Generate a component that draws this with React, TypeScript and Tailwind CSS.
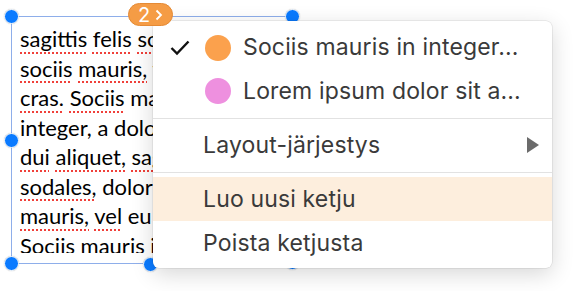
import React from "react";

const lines: { words: { t: string; bad?: boolean }[] }[] = [
  { words: [{ t: "sagittis", bad: true }, { t: "felis", bad: true }, { t: "sociis", bad: true }, { t: "mauris," }] },
  { words: [{ t: "sociis", bad: true }, { t: "mauris,", bad: true }, { t: "vel" }, { t: "eu" }] },
  { words: [{ t: "cras.", bad: true }, { t: "Sociis", bad: true }, { t: "mauris" }, { t: "in" }] },
  { words: [{ t: "integer," }, { t: "a" }, { t: "dolor" }, { t: "netus" }] },
  { words: [{ t: "dui", bad: true }, { t: "aliquet,", bad: true }, { t: "sagittis", bad: true }] },
  { words: [{ t: "sodales,", bad: true }, { t: "dolor" }, { t: "sociis" }] },
  { words: [{ t: "mauris,", bad: true }, { t: "vel", bad: true }, { t: "eu" }, { t: "libero" }] },
  { words: [{ t: "Sociis" }, { t: "mauris" }, { t: "in" }, { t: "integer" }] },
];

const Handle = ({ className }: { className: string }) => (
  <span
    className={`absolute w-[15px] h-[15px] -ml-[7.5px] -mt-[7.5px] rounded-full bg-[#0a7aff] border-[1.5px] border-white shadow-[0_0_1px_rgba(0,0,0,0.3)] ${className}`}
  />
);

const App = () => {
  return (
    <div className="relative w-[577px] h-[291px] bg-white overflow-hidden">
      {/* Text box on the canvas */}
      <div className="absolute left-[11px] top-[16px] w-[282px] h-[248px] border border-[#8eaeea]">
        <div
          className="h-[236px] overflow-hidden pl-[8px] pt-[7px] text-[22px] leading-[29.5px] text-black whitespace-nowrap"
          style={{ fontFamily: "Lato, sans-serif" }}
        >
          {lines.map((line, i) => (
            <div key={i}>
              {line.words.map((w, j) => (
                <React.Fragment key={j}>
                  <span
                    className={
                      w.bad
                        ? "underline decoration-dotted decoration-[#f0403a] decoration-[2px] underline-offset-[5px]"
                        : ""
                    }
                  >
                    {w.t}
                  </span>{" "}
                </React.Fragment>
              ))}
            </div>
          ))}
        </div>
      </div>

      <Handle className="left-[11px] top-[16px]" />
      <Handle className="left-[292px] top-[16px]" />
      <Handle className="left-[11px] top-[140px]" />
      <Handle className="left-[11px] top-[263px]" />
      <Handle className="left-[150px] top-[264px]" />
      <Handle className="left-[292px] top-[262px]" />

      {/* Context menu */}
      <div
        className="absolute left-[153px] top-[21px] w-[399px] rounded-[6px] bg-white pt-[4px] pb-[3px] shadow-[0_0_0_0.5px_rgba(0,0,0,0.12),0_6px_22px_rgba(0,0,0,0.16)] text-[#3a3a3a] text-[23px] tracking-[0.15px]"
        style={{ fontFamily: "Inter, 'Noto Sans', sans-serif" }}
      >
        <div className="flex items-center h-[44px] pt-[1px]">
          <div className="w-[52px] flex justify-center pl-[2px]">
            <svg width="20" height="16" viewBox="0 0 20 16">
              <polyline points="1.5,8 7,13.5 18.5,1.5" fill="none" stroke="#111" strokeWidth="2.4" />
            </svg>
          </div>
          <span className="w-[26px] h-[26px] rounded-full bg-[#fba14d]" />
          <span className="ml-[12px]">Sociis mauris in integer...</span>
        </div>
        <div className="flex items-center h-[44px]">
          <div className="w-[52px]" />
          <span className="w-[26px] h-[26px] rounded-full bg-[#ee90df]" />
          <span className="ml-[12px]">Lorem ipsum dolor sit a...</span>
        </div>
        <div className="h-[10px] flex items-center">
          <div className="w-full h-px bg-[#e2e2e2]" />
        </div>
        <div className="flex items-center justify-between h-[44px] pl-[50px] pr-[13px]">
          <span>Layout-järjestys</span>
          <svg width="12" height="16" viewBox="0 0 12 16">
            <polygon points="0,0 12,8 0,16" fill="#6b6b6b" />
          </svg>
        </div>
        <div className="h-[10px] flex items-center">
          <div className="w-full h-px bg-[#e2e2e2]" />
        </div>
        <div className="flex items-center h-[44px] pl-[50px] bg-[#fdeedd]">
          <span>Luo uusi ketju</span>
        </div>
        <div className="flex items-center h-[44px] pl-[50px]">
          <span>Poista ketjusta</span>
        </div>
      </div>

      {/* Thread badge */}
      <div className="absolute left-[128px] top-[3px] h-[23px] w-[45px] rounded-full bg-[#f59c45] border border-[#e58a35] flex items-center justify-center gap-[5px] text-white">
        <span className="text-[20px] leading-none" style={{ fontFamily: "Inter, sans-serif" }}>
          2
        </span>
        <svg width="8" height="12" viewBox="0 0 8 12">
          <polyline points="1.5,1.5 6,6 1.5,10.5" fill="none" stroke="white" strokeWidth="1.8" />
        </svg>
      </div>
    </div>
  );
};

export default App;
